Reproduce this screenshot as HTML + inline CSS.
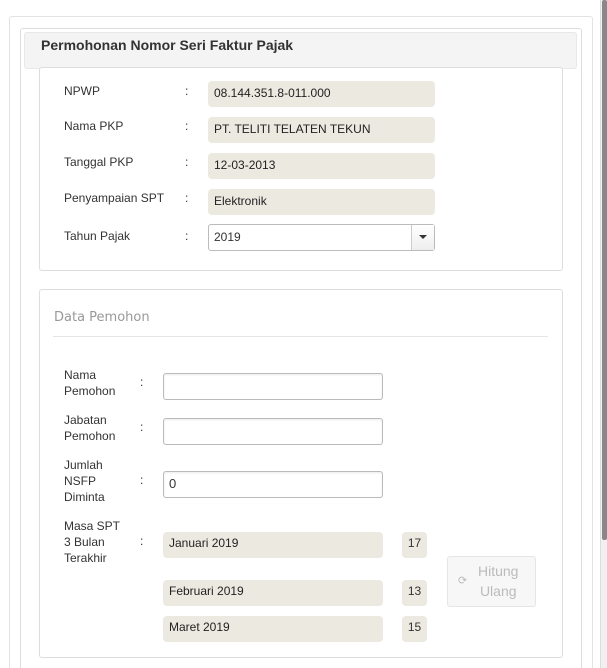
<!DOCTYPE html>
<html style="height:668px;overflow:hidden"><head><style>
body{margin:0;width:607px;height:668px;background:#fff;font-family:"Liberation Sans",sans-serif;font-size:12px;color:#333;position:relative;overflow:hidden}
.a{position:absolute;box-sizing:border-box}
.outer{left:9px;top:16px;width:584px;height:652px;border:1px solid #e3e3e3;border-bottom:none;background:#fff;border-radius:3px 3px 0 0}
.inner{left:20px;top:28px;width:562px;height:640px;border:1px solid #ddd;border-bottom:none;border-radius:3px 3px 0 0}
.hdr{left:24px;top:32px;width:553px;height:37px;background:#f4f4f4;border:1px solid #e8e8e8;border-radius:3px;font-weight:bold;font-size:14px;color:#333;padding:4px 0 0 16px}
.box{border:1px solid #ddd;border-radius:3px;background:#fff}
.lbl{font-size:12px;color:#333}
.ro{background:#ece9e1;border-radius:4px;padding:6px 0 0 6px;color:#222;height:26px;width:227px;font-size:12px}
.inp{border:1px solid #bbb;border-radius:3px;background:#fff;height:27px;width:220px;padding:4px 5px;font-size:13px;box-shadow:inset 0 1px 2px rgba(0,0,0,.08)}
.num{background:#ece9e1;border-radius:4px;width:25px;height:26px;padding:5px 0 0 0;text-align:center}
</style></head><body>
<div class="a outer"></div>
<div class="a inner"></div>
<div class="a hdr">Permohonan Nomor Seri Faktur Pajak</div>
<div class="a box" style="left:39px;top:67px;width:524px;height:204px"></div>
<div class="a lbl" style="left:64px;top:84px">NPWP</div>
<div class="a lbl" style="left:64px;top:119px">Nama PKP</div>
<div class="a lbl" style="left:64px;top:155px">Tanggal PKP</div>
<div class="a lbl" style="left:64px;top:191px">Penyampaian SPT</div>
<div class="a lbl" style="left:64px;top:229px">Tahun Pajak</div>
<div class="a lbl" style="left:185px;top:84px">:</div>
<div class="a lbl" style="left:185px;top:119px">:</div>
<div class="a lbl" style="left:185px;top:155px">:</div>
<div class="a lbl" style="left:185px;top:191px">:</div>
<div class="a lbl" style="left:185px;top:229px">:</div>
<div class="a ro" style="left:208px;top:81px;padding-top:5px">08.144.351.8-011.000</div>
<div class="a ro" style="left:208px;top:117px;padding-top:5px">PT. TELITI TELATEN TEKUN</div>
<div class="a ro" style="left:208px;top:153px;padding-top:5px">12-03-2013</div>
<div class="a ro" style="left:208px;top:189px;padding-top:5px">Elektronik</div>
<div class="a" style="left:208px;top:224px;width:227px;height:27px;border:1px solid #bbb;border-radius:3px;background:#fff;padding:5px 0 0 5px">2019</div>
<div class="a" style="left:411px;top:225px;width:23px;height:25px;border-left:1px solid #ccc;background:linear-gradient(#fff,#eee)"><div class="a" style="left:7px;top:10px;width:0;height:0;border-left:4px solid transparent;border-right:4px solid transparent;border-top:4px solid #333"></div></div>

<div class="a box" style="left:39px;top:289px;width:524px;height:369px"></div>
<div class="a" style="left:54px;top:310px;font-family:'DejaVu Sans',sans-serif;font-size:13px;color:#999">Data Pemohon</div>
<div class="a" style="left:53px;top:336px;width:495px;height:1px;background:#e5e5e5"></div>
<div class="a lbl" style="left:64px;top:367px;line-height:16px">Nama<br>Pemohon</div>
<div class="a lbl" style="left:64px;top:412px;line-height:16px">Jabatan<br>Pemohon</div>
<div class="a lbl" style="left:64px;top:457px;line-height:16px">Jumlah<br>NSFP<br>Diminta</div>
<div class="a lbl" style="left:64px;top:518px;line-height:16px">Masa SPT<br>3 Bulan<br>Terakhir</div>
<div class="a lbl" style="left:140px;top:375px">:</div>
<div class="a lbl" style="left:140px;top:420px">:</div>
<div class="a lbl" style="left:140px;top:473px">:</div>
<div class="a lbl" style="left:140px;top:534px">:</div>
<div class="a inp" style="left:163px;top:373px"></div>
<div class="a inp" style="left:163px;top:418px"></div>
<div class="a inp" style="left:163px;top:471px">0</div>
<div class="a ro" style="left:163px;top:532px;width:220px;padding-top:4px">Januari 2019</div>
<div class="a ro" style="left:163px;top:580px;width:220px;padding-top:4px">Februari 2019</div>
<div class="a ro" style="left:163px;top:616px;width:220px;padding-top:4px">Maret 2019</div>
<div class="a num" style="left:402px;top:532px;padding-top:4px">17</div>
<div class="a num" style="left:402px;top:580px;padding-top:4px">13</div>
<div class="a num" style="left:402px;top:616px;padding-top:4px">15</div>
<div class="a" style="left:447px;top:556px;width:89px;height:51px;border:1px solid #e5e5e5;border-radius:3px;background:#f7f7f7;color:#bbb;font-size:14px">
<div class="a" style="left:10px;top:17px;font-size:11px">⟳</div>
<div class="a" style="left:30px;top:4px;line-height:20px;text-align:center">Hitung<br>Ulang</div></div>
<div class="a" style="left:600px;top:0;width:7px;height:668px;background:#f0f0f0;border-left:1px solid #ddd"></div>
<div class="a" style="left:602px;top:0;width:5px;height:540px;background:#888;border-radius:2px"></div>
</body></html>
